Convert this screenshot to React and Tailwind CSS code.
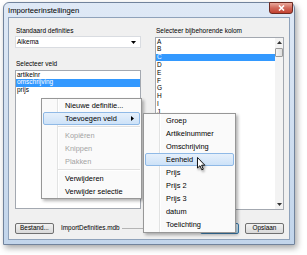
import React from "react";

const kolommen = "ABCDEFGHIJKLMNOPQRSTUV".split("");
const velden = ["artikelnr", "omschrijving", "prijs"];
const subItems = ["Groep", "Artikelnummer", "Omschrijving", "Eenheid", "Prijs", "Prijs 2", "Prijs 3", "datum", "Toelichting"];

const menuBg =
  "bg-[linear-gradient(to_right,#fafafa_15px,#e2e3e3_15px,#e2e3e3_16px,#ffffff_16px,#ffffff_17px,#fafafa_17px)]";
const hiItem = "rounded-[2px] border border-[#8fb9e6] bg-gradient-to-b from-[#e6f0fb] to-[#cde2f8]";

const MenuItem = ({ label, active, disabled, arrow, pad = "pl-[21px]" }) => (
  <div
    className={`mx-[1px] flex h-[13px] items-center justify-between pr-[5px] text-[7.4px] leading-none ${pad} ${
      active ? hiItem : "border border-transparent"
    } ${disabled ? "text-[#a3a3a3]" : "text-black"}`}
  >
    <span>{label}</span>
    {arrow && (
      <svg width="3" height="5" viewBox="0 0 3 5">
        <path d="M0 0 L3 2.5 L0 5 Z" fill="#000" />
      </svg>
    )}
  </div>
);

const Sep = ({ h }) => (
  <div className={`flex ${h} items-center pl-[16px] pr-[1px]`}>
    <div className="h-[2px] w-full border-b border-t border-b-white border-t-[#e0e0e0]" />
  </div>
);

const Button = ({ children, focused }) => (
  <div
    className={`flex h-[11px] w-[39px] items-center justify-center rounded-[2px] border text-[6.4px] leading-none ${
      focused
        ? "border-[#3c7fb1] bg-gradient-to-b from-[#eaf6fd] to-[#bee6fd]"
        : "border-[#707070] bg-gradient-to-b from-[#f2f2f2] to-[#d9d9d9]"
    }`}
  >
    {children}
  </div>
);

export default function App() {
  return (
    <div className="h-[255px] w-[307px] overflow-hidden bg-white pl-[3px] pt-[2px] font-['Liberation_Sans',Arial,sans-serif] text-black">
      <div className="flex h-[243px] w-[292px] flex-col rounded-t-[6px] border border-[#71839c] bg-gradient-to-b from-[#dfe9f6] to-[#c2d5eb] shadow-[2px_3px_6px_rgba(0,0,0,0.35)]">
        {/* Title bar */}
        <div className="flex h-[14px] items-start justify-between">
          <span className="self-center pl-[4px] pt-[1px] text-[7.7px] leading-none">Importeerinstellingen</span>
          <div className="-mt-[1px] mr-[1px] flex h-[12px] w-[24px] items-center justify-center rounded-b-[3px] border border-[#6d2a22] bg-gradient-to-b from-[#e9a99c] via-[#d0685a] to-[#c2402f]">
            <svg width="7" height="6" viewBox="0 0 7 6">
              <path d="M1 0.5 L6 5.5 M6 0.5 L1 5.5" stroke="#fff" strokeWidth="1.6" />
            </svg>
          </div>
        </div>

        {/* Content */}
        <div className="relative mx-[4px] mb-[4px] flex flex-1 flex-col border border-[#8fa2ba] bg-[#f0f0f0] pb-[5px] pl-[6px] pr-[5px] pt-[9px] text-[6.5px] leading-none">
          <div className="flex gap-[14px]">
            {/* Left column */}
            <div className="flex w-[126px] flex-col">
              <div className="h-[8px] pl-[1px] leading-[8px]">Standaard definities</div>
              <div className="mt-[1px] flex h-[12px] items-center justify-between border border-[#d9dce1] bg-white pl-[1px] pr-[4px]">
                <span>Alkema</span>
                <svg width="5" height="3" viewBox="0 0 5 3">
                  <path d="M0 0 L5 0 L2.5 3 Z" fill="#000" />
                </svg>
              </div>
              <div className="mt-[12px] h-[8px] pl-[1px] leading-[8px]">Selecteer veld</div>
              <div className="mt-[2px] h-[139px] border border-[#a3a8b0] bg-white">
                {velden.map((v) => (
                  <div
                    key={v}
                    className={`flex h-[7.8px] items-center pl-[1px] ${v === "omschrijving" ? "bg-[#3399ff] text-white" : ""}`}
                  >
                    {v}
                  </div>
                ))}
              </div>
            </div>

            {/* Right column */}
            <div className="flex w-[129px] flex-col">
              <div className="h-[8px] pl-[1px] leading-[8px]">Selecteer bijbehorende kolom</div>
              <div className="mt-[2px] flex h-[173px] border border-[#a3a8b0] bg-white">
                <div className="flex-1 overflow-hidden">
                  {kolommen.map((k) => (
                    <div
                      key={k}
                      className={`flex h-[7.8px] items-center pl-[1px] ${k === "C" ? "bg-[#3399ff] text-white" : ""}`}
                    >
                      {k}
                    </div>
                  ))}
                </div>
                <div className="flex w-[8px] flex-col items-center bg-[#f3f3f3]">
                  <div className="flex h-[9px] items-center">
                    <svg width="5" height="3" viewBox="0 0 5 3">
                      <path d="M0 3 L5 3 L2.5 0 Z" fill="#333" />
                    </svg>
                  </div>
                  <div className="mt-[1px] h-[9px] w-[8px] rounded-[1px] border border-[#9a9a9a] bg-gradient-to-r from-[#f5f5f5] to-[#dedede]" />
                  <div className="flex-1" />
                  <div className="flex h-[9px] items-center">
                    <svg width="5" height="3" viewBox="0 0 5 3">
                      <path d="M0 0 L5 0 L2.5 3 Z" fill="#333" />
                    </svg>
                  </div>
                </div>
              </div>
            </div>
          </div>

          {/* Bottom row */}
          <div className="mt-auto flex items-center">
            <div className="w-[38px]">
              <Button>
                <span>Bestand...</span>
              </Button>
            </div>
            <span className="ml-[8px] text-[6.4px]">ImportDefinities.mdb</span>
            <div className="ml-[2px] mr-[4px] h-[1px] flex-1 bg-[#b4b4b4]" />
            <Button focused>Importeren</Button>
            <div className="ml-[6px]">
              <Button>Opslaan</Button>
            </div>
          </div>

          {/* Context menu */}
          <div
            className={`absolute left-[32px] top-[80px] flex w-[101px] flex-col border border-[#979797] pb-[0px] pt-[0px] shadow-[2px_2px_3px_rgba(0,0,0,0.3)] ${menuBg}`}
          >
            <MenuItem label="Nieuwe definitie..." />
            <MenuItem label="Toevoegen veld" active arrow />
            <Sep h="h-[4px]" />
            <MenuItem label="Kopiëren" disabled />
            <MenuItem label="Knippen" disabled />
            <MenuItem label="Plakken" disabled />
            <Sep h="h-[4px]" />
            <MenuItem label="Verwijderen" />
            <MenuItem label="Verwijder selectie" />
          </div>

          {/* Submenu */}
          <div
            className={`absolute left-[134px] top-[95px] flex w-[93px] flex-col border border-[#979797] pb-[1px] shadow-[2px_2px_3px_rgba(0,0,0,0.3)] ${menuBg}`}
          >
            {subItems.map((s) => (
              <MenuItem key={s} label={s} active={s === "Eenheid"} pad="pl-[20px]" />
            ))}
          </div>

          {/* Mouse pointer */}
          <svg
            className="absolute left-[188px] top-[139px] drop-shadow-[1px_2px_1px_rgba(0,0,0,0.35)]"
            width="9"
            height="14"
            viewBox="0 0 9 14"
          >
            <path
              d="M0.5 0.5 L0.5 11 L3 8.7 L4.8 12.8 L6.3 12.2 L4.6 8.2 L7.8 8.2 Z"
              fill="#fff"
              stroke="#000"
              strokeWidth="0.9"
              strokeLinejoin="round"
            />
          </svg>
        </div>
      </div>
    </div>
  );
}
